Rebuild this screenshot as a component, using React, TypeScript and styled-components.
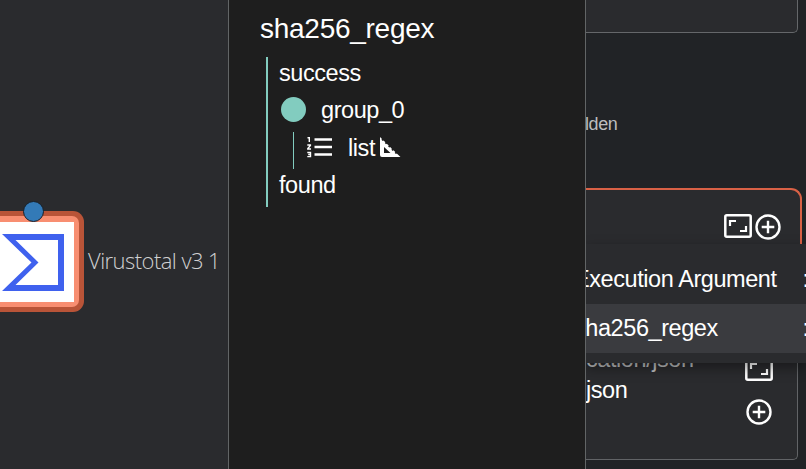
import React from "react";
import styled, { createGlobalStyle } from "styled-components";

const GlobalStyle = createGlobalStyle`
  *, *::before, *::after { box-sizing: border-box; }
  html, body { margin: 0; background: #212326; }
  body { overflow: hidden; font-family: "Liberation Sans", Arial, sans-serif; }
  svg { display: block; flex: none; }
`;

const Page = styled.main`
  display: grid;
  grid-template-columns: 228px 358px 220px;
  width: 806px;
  height: 469px;
  overflow: hidden;
  color: #fff;
  font-size: 23.5px;
  letter-spacing: -0.43px;
  white-space: nowrap;
`;

const Canvas = styled.section`
  position: relative;
  background: #2a2b2e;
  overflow: hidden;
`;

const Node = styled.div`
  position: absolute;
  left: -20px;
  top: 211px;
  display: flex;
  align-items: center;
  gap: 4px;
`;

const NodeFrame = styled.div`
  width: 104px;
  height: 101px;
  padding: 5px;
  border-radius: 11px;
  background: #b95438;
`;

const NodeInner = styled.div`
  height: 100%;
  padding: 5.5px;
  border-radius: 7px;
  background: #f88e71;
`;

const NodeFace = styled.div`
  height: 100%;
  padding: 12px 0 0 11.5px;
  background: #fff;
`;

const NodeLabel = styled.span`
  padding-bottom: 3px;
  color: #d0d0d1;
  font: 300 22px "Open Sans", sans-serif;
  letter-spacing: -0.55px;
`;

const Port = styled.i`
  position: absolute;
  left: 43px;
  top: -10px;
  width: 21px;
  height: 21px;
  border: 1.5px solid #17202a;
  border-radius: 50%;
  background: #337ab7;
`;

const TreePanel = styled.section`
  padding: 12px 0 0 31px;
  border: solid #626566;
  border-width: 0 1px;
  background: #1e1e1e;
`;

const TreeTitle = styled.h1`
  margin: 0;
  height: 45px;
  font-size: 28px;
  font-weight: 400;
  letter-spacing: -0.27px;
  line-height: 33px;
`;

const Tree = styled.div`
  width: 250px;
  height: 150px;
  margin-left: 6px;
  border-left: 2px solid #82ccbf;
`;

const TreeRow = styled.div<{ $indent?: number; $leading?: number }>`
  display: flex;
  align-items: flex-start;
  height: 37.5px;
  padding-left: ${(p) => p.$indent ?? 11}px;
  line-height: ${(p) => p.$leading ?? 31}px;
`;

const Dot = styled.i`
  width: 25px;
  height: 25px;
  margin: 2px 15px 0 2px;
  border-radius: 50%;
  background: #82ccbf;
`;

const Guide = styled.i`
  width: 1px;
  height: 37px;
  margin-right: 13px;
  background: #82ccbf;
`;

const ListGlyph = styled.svg`
  margin: 4px 16px 0 0;
`;

const RulerGlyph = styled.svg`
  margin: 5px 0 0 5px;
`;

const Inspector = styled.section`
  position: relative;
  height: 469px;
  overflow: hidden;
  display: flex;
  flex-direction: column;
  background: #212326;
`;

const UpperField = styled.div`
  width: 212px;
  height: 33px;
  border: solid #65676a;
  border-width: 0 1px 1px 0;
  border-radius: 0 0 5px 0;
  background: #2a2b2e;
`;

const Hint = styled.div`
  height: 155px;
  padding-top: 81px;
  color: #bcbdbe;
  font-size: 18px;
  line-height: 20px;
  text-indent: -1px;
`;

const ActiveField = styled.div`
  display: flex;
  align-items: flex-start;
  justify-content: flex-end;
  gap: 3px;
  width: 216px;
  height: 56px;
  padding: 24px 19px 0 0;
  border: solid #d96146;
  border-width: 2px 2px 0 0;
  border-radius: 0 11px 0 0;
  background: #2a2b2e;
`;

const LowerField = styled.div`
  display: flex;
  justify-content: space-between;
  width: 212px;
  height: 216px;
  padding: 101px 24px 0 0;
  border: solid #626467;
  border-width: 0 1px 1px 0;
  border-radius: 0 0 5px 0;
  background: #2a2b2e;
`;

const FieldText = styled.div`
  line-height: 30px;
`;

const MimeText = styled.div`
  margin: -1px 0 1px;
  color: #bcbdbe;
`;

const FieldActions = styled.div`
  display: flex;
  flex-direction: column;
  align-items: center;
  gap: 18px;
  padding-top: 12px;
`;

const Menu = styled.div`
  position: absolute;
  left: 0;
  right: 0;
  top: 244px;
  height: 119px;
  padding-top: 10px;
  overflow: hidden;
  background: #2a2b2e;
  box-shadow: 0 5px 12px #0006;
`;

const MenuItem = styled.div<{ $active?: boolean }>`
  display: flex;
  align-items: center;
  justify-content: space-between;
  width: 226px;
  height: ${(p) => (p.$active ? 49 : 50)}px;
  padding: ${(p) => (p.$active ? "0 3.5px 1px 0" : "1px 3.5px 0 0")};
  background: ${(p) => (p.$active ? "#3a3b3f" : "transparent")};
`;

const MenuText = styled.span<{ $shift: number }>`
  margin-left: ${(p) => p.$shift}px;
`;

const ExpandIcon = () => (
  <svg width="28" height="24" viewBox="0 0 28 24" fill="none" stroke="#fff">
    <rect x="1.3" y="1.3" width="25.4" height="21.4" rx="1.5" strokeWidth="2.5" />
    <path d="M6 12V7h6M22 12v5h-6" strokeWidth="2.2" />
  </svg>
);

const AddIcon = () => (
  <svg width="26" height="26" viewBox="0 0 26 26" fill="none" stroke="#fff" strokeWidth="2.4">
    <circle cx="13" cy="13" r="11.5" />
    <path d="M13 6.7v12.6M6.7 13h12.6" />
  </svg>
);

const SigmaLogo = () => (
  <svg width="62" height="57" viewBox="0 0 62 57">
    <path fill="#3f61ee" fillRule="evenodd" d="M0 0H62V57H0L29.5 28.5ZM13.5 6L36.5 28.5L13.5 51H56V6Z" />
  </svg>
);

export default function App() {
  return (
    <>
      <GlobalStyle />
      <Page>
        <Canvas>
          <Node>
            <NodeFrame>
              <NodeInner>
                <NodeFace>
                  <SigmaLogo />
                </NodeFace>
              </NodeInner>
            </NodeFrame>
            <NodeLabel>Virustotal v3 1</NodeLabel>
            <Port />
          </Node>
        </Canvas>

        <TreePanel>
          <TreeTitle>sha256_regex</TreeTitle>
          <Tree>
            <TreeRow $leading={33}>success</TreeRow>
            <TreeRow>
              <Dot />
              group_0
            </TreeRow>
            <TreeRow $indent={25} $leading={33}>
              <Guide />
              <ListGlyph width="25" height="22" viewBox="0 0 25 22" fill="none" stroke="#fff">
                <path strokeWidth="2.5" d="M7.5 3.5H25M7.5 11H25M7.5 18.5H25" />
                <path strokeWidth="1.4" d="M.5 1.7H2.3V6M.3 9H3.4V9.6L.8 12.4V13H4M.3 16.5H3.5V20.6H.3M1.2 18.5H3.5" />
              </ListGlyph>
              list
              <RulerGlyph width="21" height="21" viewBox="0 0 21 21">
                <path fill="#fff" fillRule="evenodd" d="M0 0L2 2L1.4 2.8L2.7 4L3.5 3.4L5.4 5.3L4.8 6.1L6 7.3L6.8 6.7L8.7 8.6L8.1 9.4L9.4 10.6L10.2 10L12 11.9L11.4 12.7L12.7 13.9L13.5 13.3L15.3 15.1L14.7 15.9L16 17.1L16.8 16.5L20.5 20H2Q0 20 0 18ZM4 10V16H10.5Z" />
              </RulerGlyph>
            </TreeRow>
            <TreeRow>found</TreeRow>
          </Tree>
        </TreePanel>

        <Inspector>
          <UpperField />
          <Hint>lden</Hint>
          <ActiveField>
            <ExpandIcon />
            <AddIcon />
          </ActiveField>
          <LowerField>
            <FieldText>
              <MimeText>cation/json</MimeText>
              <div>json</div>
            </FieldText>
            <FieldActions>
              <ExpandIcon />
              <AddIcon />
            </FieldActions>
          </LowerField>
          <Menu>
            <MenuItem>
              <MenuText $shift={-12}>Execution Argument</MenuText>
              <span>:</span>
            </MenuItem>
            <MenuItem $active>
              <MenuText $shift={-12}>sha256_regex</MenuText>
              <span>:</span>
            </MenuItem>
          </Menu>
        </Inspector>
      </Page>
    </>
  );
}
